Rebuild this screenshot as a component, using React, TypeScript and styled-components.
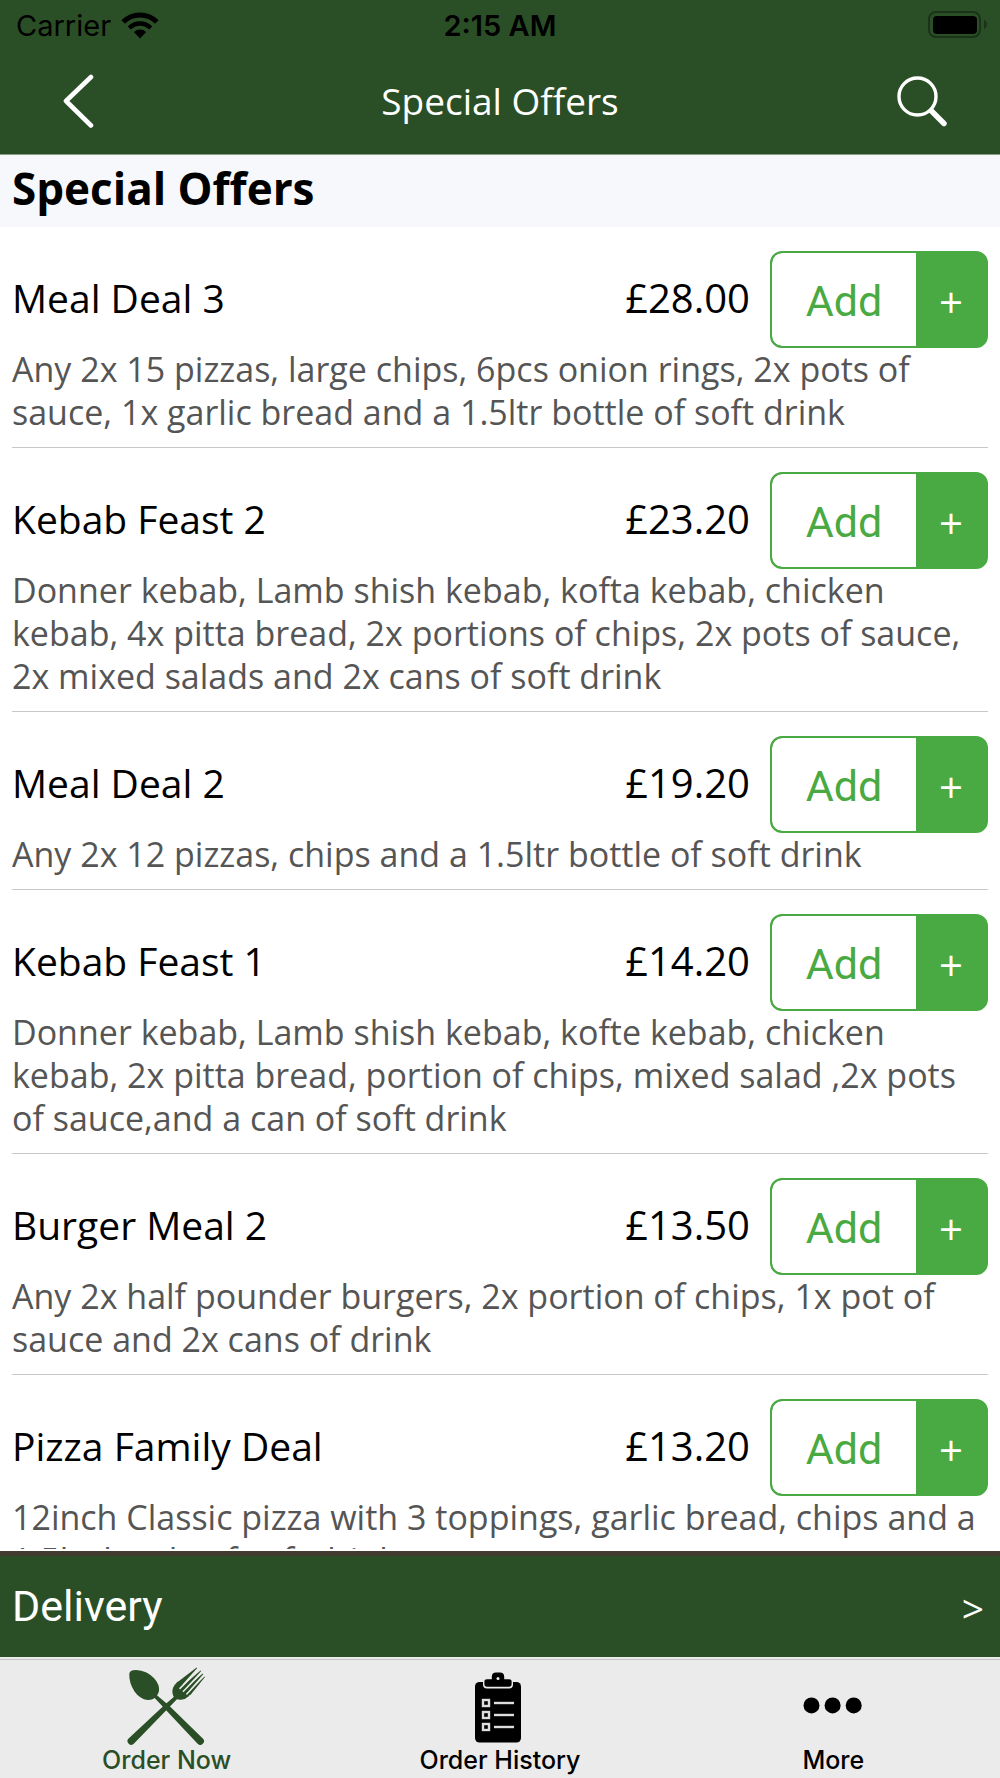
import React from 'react';
import styled, { createGlobalStyle } from 'styled-components';

const GlobalStyle = createGlobalStyle`
  *, *::before, *::after { box-sizing: border-box; }
  body { margin: 0; background: #fff; }
  button { border: 0; padding: 0; background: none; font: inherit; color: inherit; cursor: pointer; }
`;

const color = {
  brand: '#2a4f26',
  action: '#49a942',
  tabBar: '#ebebeb',
  muted: '#555',
};
const brandFont = '"Open Sans", "Noto Sans", sans-serif';
const systemFont = 'Inter, "Liberation Sans", sans-serif';
const buttonFont = 'Roboto, "Liberation Sans", sans-serif';

const Screen = styled.div`
  display: flex;
  flex-direction: column;
  height: 100vh;
  font-family: ${brandFont};
  color: #000;
`;

const Header = styled.header`
  background: ${color.brand};
  border-bottom: 1px solid #8a9c88;
`;

const StatusBar = styled.div`
  display: grid;
  grid-template-columns: 1fr auto 1fr;
  align-items: center;
  height: 50px;
  padding: 0 12px;
  font-family: ${systemFont};
  font-size: 29px;
`;

const Carrier = styled.div`
  display: flex;
  align-items: center;
  gap: 10px;
  padding-left: 4px;
`;

const Clock = styled.time`
  font-weight: 600;
`;

const Battery = styled.svg`
  justify-self: end;
`;

const NavBar = styled.div`
  display: grid;
  grid-template-columns: 156px 1fr 156px;
  align-items: center;
  justify-items: center;
  height: 104px;
  padding-bottom: 2px;
  color: #fff;
`;

const NavTitle = styled.h1`
  margin: 0;
  font-size: 37px;
  font-weight: 400;
  line-height: 52px;
`;

const IconButton = styled.button`
  display: grid;
  place-items: center;
  width: 80px;
  height: 80px;
`;

const SectionTitle = styled.h2`
  flex: none;
  margin: 0;
  padding: 0 12px 6px;
  background: #f6f8fb;
  font-size: 44px;
  font-weight: 700;
  line-height: 66px;
`;

const OfferList = styled.ul`
  flex: 1;
  min-height: 0;
  margin: 0 0 2px;
  padding: 0 12px;
  overflow-y: auto;
  scrollbar-width: none;
  list-style: none;
`;

const OfferItem = styled.li`
  padding: 24px 0 13px;
  border-bottom: 1px solid #c8c8c8;
`;

const OfferHead = styled.div`
  display: flex;
  align-items: center;
  gap: 20px;
`;

const OfferName = styled.h3`
  flex: 1;
  margin: 0;
  padding-bottom: 4px;
  font-size: 39px;
  font-weight: 400;
  line-height: 52px;
`;

const Price = styled.span`
  padding-bottom: 4px;
  font-size: 40px;
  line-height: 52px;
`;

const Description = styled.p`
  margin: 0;
  font-size: 34px;
  line-height: 43px;
  color: ${color.muted};
`;

const AddButton = styled.button`
  display: flex;
  width: 218px;
  height: 97px;
  border: 2px solid ${color.action};
  border-radius: 12px;
  background: ${color.action};
  overflow: hidden;
`;

const AddLabel = styled.span`
  display: grid;
  flex: 1;
  place-items: center;
  align-self: stretch;
  padding-top: 2px;
  border-radius: 10px 0 0 10px;
  background: #fff;
  color: ${color.action};
  font-family: ${buttonFont};
  font-size: 43px;
`;

const AddPlus = styled.span`
  display: grid;
  place-items: center;
  align-self: stretch;
  width: 70px;
  padding-top: 4px;
  color: #fff;
  font-size: 42px;
`;

const DeliveryBar = styled.button`
  display: flex;
  flex: none;
  align-items: center;
  justify-content: space-between;
  height: 106px;
  padding: 0 16px 2px 12px;
  border-top: 5px solid #423b30;
  background: ${color.brand};
  color: #fff;
  font-family: ${buttonFont};
  font-size: 43px;
`;

const Chevron = styled.span`
  padding-top: 4px;
  font-family: ${brandFont};
  font-size: 39px;
`;

const TabBar = styled.nav`
  display: grid;
  flex: none;
  grid-template-columns: repeat(3, 1fr);
  margin-top: 2px;
  padding: 5px 0 3px;
  border-top: 1px solid #c2c2c2;
  background: ${color.tabBar};
  box-shadow: 0 -2px 0 ${color.tabBar};
`;

const Tab = styled.a<{ $active?: boolean }>`
  display: flex;
  flex-direction: column;
  align-items: center;
  color: ${(p) => (p.$active ? color.brand : '#000')};
  font-family: ${systemFont};
  font-size: 25px;
  font-weight: 500;
  line-height: 30px;
  text-decoration: none;
`;

const WifiIcon = () => (
  <svg width="38" height="29" viewBox="0 0 38 29" aria-hidden="true">
    <path d="M2.2 11 A23.6 23.6 0 0 1 35.8 11" fill="none" stroke="#000" strokeWidth="5" />
    <path d="M8.2 17 A15.2 15.2 0 0 1 29.8 17" fill="none" stroke="#000" strokeWidth="4.6" />
    <path d="M19 27.4 L12.8 21 A9 9 0 0 1 25.2 21 Z" />
  </svg>
);

const BatteryIcon = () => (
  <Battery width="60" height="28" viewBox="0 0 60 28" role="img" aria-label="Battery full">
    <rect x="1" y="1" width="51" height="25" rx="7" fill="none" stroke="#1b3319" strokeWidth="2" />
    <rect x="5" y="5" width="44" height="18" rx="4" />
    <path d="M56 8.5 Q59 10.5 59 13.5 Q59 16.5 56 18.5 Z" fill="#1b3319" />
  </Battery>
);

const BackIcon = () => (
  <svg width="32" height="56" viewBox="0 0 32 56" fill="none" stroke="#fff" strokeWidth="4.6" strokeLinecap="round" strokeLinejoin="round" aria-hidden="true">
    <path d="M29 4 L4 28 L29 52.5" />
  </svg>
);

const SearchIcon = () => (
  <svg width="52" height="52" viewBox="0 0 52 52" fill="none" stroke="#fff" aria-hidden="true">
    <circle cx="21.5" cy="21.5" r="18.5" strokeWidth="3.4" />
    <path d="M35.5 36 L48 48.5" strokeWidth="5.4" strokeLinecap="round" />
  </svg>
);

const CutleryIcon = () => (
  <svg width="80" height="80" viewBox="0 0 80 80" fill="currentColor" aria-hidden="true">
    <path d="M2.3 8.5 Q3 5.6 6.5 5.2 Q13 4.4 19.5 7.6 Q28.5 12.6 31.4 20 Q33.4 26 29.8 31 Q26.5 35.2 20.5 35 Q13 34.2 7.5 26.5 Q1.8 17.5 2.3 8.5 Z" />
    <path d="M27.2 32.4 L29.6 30 L41.5 40 L75.8 73.4 A3.6 3.6 0 0 1 70.6 78.8 L37.5 43.5 Z" />
    <path d="M49.4 29.8 L51.6 32.4 L41.5 43 L7 78.6 A3.6 3.6 0 0 1 1.6 73.4 L38 39.6 Z" />
    <path d="M48 19.4 Q43.8 24.5 46.3 31 Q48 35 54 34.8 Q58.6 34.4 61.6 31.2 L64 28.6 L58 21 L51 16.4 Z" />
    <path d="M49.4 18 L69.6 2.4 L70.2 3 L53.8 21.6 Z" />
    <path d="M53.4 22.4 L73.6 5.4 L74.2 6 L57 25 Z" />
    <path d="M56.4 25.6 L75.6 8.6 L76.2 9.2 L60 28 Z" />
    <path d="M59.4 28.6 L77.4 11.4 L78 12 L63.4 30 Z" />
    <g stroke={color.tabBar} strokeLinecap="round" strokeWidth="1.5">
      <path d="M53 23.4 L72 4.4" />
      <path d="M56.4 26.2 L75 7.2" />
      <path d="M59.8 29 L77 10.4" />
    </g>
  </svg>
);

const ClipboardIcon = () => (
  <svg width="80" height="80" viewBox="0 0 80 80" aria-hidden="true">
    <rect x="15" y="17" width="46" height="60.5" rx="4.5" />
    <path
      d="M23 14 V19.5 Q23 23.6 27 23.6 H49 Q53 23.6 53 19.5 V14 Z"
      fill={color.tabBar}
    />
    <path d="M24.4 16.6 Q24.4 14.2 27 14.2 H31.8 V11.5 Q32 7.6 36 7.6 H40 Q44 7.6 44.2 11.5 V14.2 H49 Q51.6 14.2 51.6 16.6 V19 Q51.6 21.8 49 21.8 H27 Q24.4 21.8 24.4 19 Z" />
    <circle cx="38" cy="13.4" r="1.5" fill={color.tabBar} />
    {[38, 50, 62].map((y) => (
      <g key={y}>
        <rect x="23" y={y - 3} width="6" height="6" fill="none" stroke="#ddd" strokeWidth="2.4" />
        <path d={`M34 ${y} H54`} stroke="#ddd" strokeWidth="2.4" />
      </g>
    ))}
  </svg>
);

const MoreIcon = () => (
  <svg width="80" height="80" viewBox="0 0 80 80" aria-hidden="true">
    <circle cx="18.5" cy="40.4" r="8" />
    <circle cx="39.6" cy="40.4" r="8" />
    <circle cx="60.7" cy="40.4" r="8" />
  </svg>
);

const offers = [
  {
    name: 'Meal Deal 3',
    price: '£28.00',
    description: 'Any 2x 15 pizzas, large chips, 6pcs onion rings, 2x pots of sauce, 1x garlic bread and a 1.5ltr bottle of soft drink',
  },
  {
    name: 'Kebab Feast 2',
    price: '£23.20',
    description: 'Donner kebab, Lamb shish kebab, kofta kebab, chicken kebab, 4x pitta bread, 2x portions of chips, 2x pots of sauce, 2x mixed salads and 2x cans of soft drink',
  },
  {
    name: 'Meal Deal 2',
    price: '£19.20',
    description: 'Any 2x 12 pizzas, chips and a 1.5ltr bottle of soft drink',
  },
  {
    name: 'Kebab Feast 1',
    price: '£14.20',
    description: 'Donner kebab, Lamb shish kebab, kofte kebab, chicken kebab, 2x pitta bread, portion of chips, mixed salad ,2x pots of sauce,and a can of soft drink',
  },
  {
    name: 'Burger Meal 2',
    price: '£13.50',
    description: 'Any 2x half pounder burgers, 2x portion of chips, 1x pot of sauce and 2x cans of drink',
  },
  {
    name: 'Pizza Family Deal',
    price: '£13.20',
    description: '12inch Classic pizza with 3 toppings, garlic bread, chips and a 1.5ltr bottle of soft drink',
  },
];

export default function App() {
  return (
    <>
      <GlobalStyle />
      <Screen>
        <Header>
          <StatusBar>
            <Carrier>
              Carrier
              <WifiIcon />
            </Carrier>
            <Clock>2:15 AM</Clock>
            <BatteryIcon />
          </StatusBar>
          <NavBar>
            <IconButton type="button" aria-label="Back">
              <BackIcon />
            </IconButton>
            <NavTitle>Special Offers</NavTitle>
            <IconButton type="button" aria-label="Search">
              <SearchIcon />
            </IconButton>
          </NavBar>
        </Header>
        <SectionTitle>Special Offers</SectionTitle>
        <OfferList>
          {offers.map((offer) => (
            <OfferItem key={offer.name}>
              <OfferHead>
                <OfferName>{offer.name}</OfferName>
                <Price>{offer.price}</Price>
                <AddButton type="button">
                  <AddLabel>Add</AddLabel>
                  <AddPlus>+</AddPlus>
                </AddButton>
              </OfferHead>
              <Description>{offer.description}</Description>
            </OfferItem>
          ))}
        </OfferList>
        <DeliveryBar type="button">
          <span>Delivery</span>
          <Chevron>&gt;</Chevron>
        </DeliveryBar>
        <TabBar>
          <Tab href="#order" $active aria-current="page">
            <CutleryIcon />
            Order Now
          </Tab>
          <Tab href="#history">
            <ClipboardIcon />
            Order History
          </Tab>
          <Tab href="#more">
            <MoreIcon />
            More
          </Tab>
        </TabBar>
      </Screen>
    </>
  );
}
